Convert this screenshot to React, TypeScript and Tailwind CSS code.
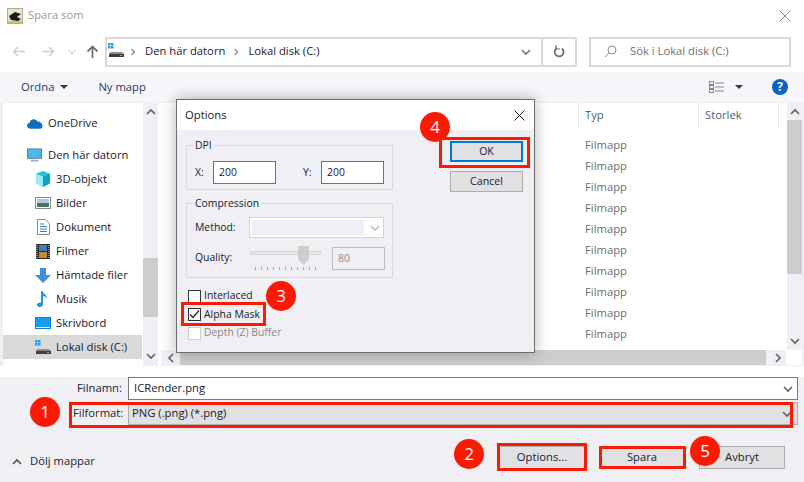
import React from "react";

const font = { fontFamily: '"Open Sans", "Noto Sans", sans-serif' };

function Badge({ n, cls }: { n: string; cls: string }) {
  return (
    <div className={"absolute w-[30px] h-[30px] rounded-full bg-[#fb1b05] text-white text-[17px] flex items-center justify-center " + cls}>
      {n}
    </div>
  );
}

function Chev({ d, cls = "" }: { d: "u" | "d" | "l" | "r"; cls?: string }) {
  const p = { u: "M1 7l4-4 4 4", d: "M1 3l4 4 4-4", l: "M7 1L3 5l4 4", r: "M3 1l4 4-4 4" }[d];
  return (
    <svg width="10" height="10" viewBox="0 0 10 10" className={"shrink-0 " + cls} fill="none" stroke="currentColor" strokeWidth="1.6">
      <path d={p} />
    </svg>
  );
}

function DiskIcon() {
  return (
    <svg width="16" height="15" viewBox="0 0 16 15">
      <rect x="0" y="0" width="2.5" height="2.5" fill="#1fa0ee" />
      <rect x="3" y="0" width="2.5" height="2.5" fill="#1fa0ee" />
      <rect x="0" y="3" width="2.5" height="2.5" fill="#1fa0ee" />
      <rect x="3" y="3" width="2.5" height="2.5" fill="#1fa0ee" />
      <path d="M2 9h12l2 2v3H1v-3z" fill="#8a8d90" />
      <rect x="1" y="11" width="15" height="3" fill="#3c3f41" />
      <rect x="12" y="12" width="2" height="1" fill="#5fd35f" />
    </svg>
  );
}

const icons: Record<string, React.ReactNode> = {
  cube: (
    <svg width="16" height="16" viewBox="0 0 17 17">
      <path d="M8.5 0L16 3v10l-7.500 4L1 13V3z" fill="#2cc3d9" />
      <path d="M1 3l7.500 3v11L1 13z" fill="#9aeaf3" />
      <path d="M8.5 6L16 3v10l-7.500 4z" fill="#12a3c4" />
    </svg>
  ),
  pic: (
    <svg width="16" height="12" viewBox="0 0 16 12">
      <rect x="0.5" y="0.500" width="15" height="11" fill="#fff" stroke="#8a8a8a" />
      <rect x="2" y="2" width="12" height="4" fill="#a9cbe6" />
      <rect x="2" y="6" width="12" height="4" fill="#51705f" />
    </svg>
  ),
  doc: (
    <svg width="13" height="16" viewBox="0 0 13 16" className="ml-[2px]">
      <path d="M.5.5h8l4 4v11H.5z" fill="#fff" stroke="#8a8a8a" />
      <path d="M3 5h4M3 7.500h7M3 10h7M3 12.500h7" stroke="#3c7fc4" />
    </svg>
  ),
  film: (
    <svg width="14" height="15" viewBox="0 0 14 15" className="ml-[1px]">
      <rect width="14" height="15" fill="#2c2c2c" />
      <rect x="3" y="1" width="8" height="6" fill="#3f7fb5" />
      <rect x="3" y="8" width="8" height="6" fill="#c08a3a" />
      <path d="M1 1v13M13 1v13" stroke="#ddd" strokeWidth="1" strokeDasharray="1 1" />
    </svg>
  ),
  down: (
    <svg width="16" height="15" viewBox="0 0 16 15">
      <path d="M5 0h6v7h5l-8 8-8-8h5z" fill="#3f8fdc" />
    </svg>
  ),
  music: (
    <svg width="12" height="16" viewBox="0 0 12 16" className="ml-[2px]">
      <path d="M4 0h1.600c.4 3 4.400 3.600 4.400 7.500-1-1.600-2.600-2.200-4-2.400V13c0 1.700-1.400 3-3.200 3C1.200 16 0 15 0 13.700c0-1.400 1.600-2.400 4-2.200z" fill="#1e90ee" />
    </svg>
  ),
  desk: (
    <svg width="16" height="12" viewBox="0 0 16 12">
      <rect width="16" height="12" fill="#0f7fdc" />
      <rect x="1" y="1" width="14" height="9" fill="#1b9bf0" />
      <rect x="1" y="10" width="14" height="1" fill="#e6f3fb" />
    </svg>
  ),
};

function NavItem({ label, icon, selected }: { label: string; icon: React.ReactNode; selected?: boolean }) {
  return (
    <div className={"flex items-center h-6 pl-[32px] " + (selected ? "bg-[#d9d9d9] w-[139px]" : "")}>
      <span className="w-[21px] flex items-center shrink-0">{icon}</span>
      <span>{label}</span>
    </div>
  );
}

export default function App() {
  return (
    <div style={font} className="relative w-[804px] h-[482px] overflow-hidden bg-white text-[11.25px] text-[#1a1a2e]">
      {/* Title bar */}
      <div className="h-[31px] flex items-center pl-[7px] pr-[13px] bg-white">
        <svg width="16" height="16" viewBox="0 0 16 16" className="mr-[5px]">
          <rect width="16" height="16" fill="#b8a98a" />
          <rect x="1" y="1" width="14" height="14" fill="#e9e4d4" />
          <path d="M2 8l6-4 6 2-4 3 4 2-3 2-7-1z" fill="#1c1c1c" />
          <rect x="1" y="13" width="14" height="2" fill="#d9c45a" />
        </svg>
        <span className="text-[#9a9a9a]">Spara som</span>
        <svg width="12" height="12" viewBox="0 0 12 12" className="ml-auto text-[#8c8c8c]" stroke="currentColor" fill="none">
          <path d="M1 1l10 10M11 1L1 11" />
        </svg>
      </div>

      {/* Address bar */}
      <div className="h-[41px] flex items-center">
        <div className="flex items-center w-[105px] pl-3 text-[#d0d0d0] shrink-0">
          <svg width="13" height="11" viewBox="0 0 13 11" stroke="currentColor" strokeWidth="1.6" fill="none"><path d="M13 5.500H2M6 1L1.500 5.500 6 10" /></svg>
          <svg width="13" height="11" viewBox="0 0 13 11" stroke="currentColor" strokeWidth="1.6" fill="none" className="ml-[17px]"><path d="M0 5.500h11M7 1l4.500 4.500L7 10" /></svg>
          <Chev d="d" cls="ml-[12px] scale-75" />
          <svg width="13" height="13" viewBox="0 0 13 13" stroke="#6f6f6f" strokeWidth="1.8" fill="none" className="ml-[9px]"><path d="M6.500 13V2M1.500 6.500l5-5 5 5" /></svg>
        </div>
        <div className="h-[30px] w-[472px] border-2 border-[#d9d9d9] flex items-center bg-white">
          <span className="ml-[1px] mt-[-2px]"><DiskIcon /></span>
          <Chev d="r" cls="ml-[4px] text-[#8a8a8a] scale-75" />
          <span className="ml-[7px]">Den här datorn</span>
          <Chev d="r" cls="ml-[6px] text-[#8a8a8a] scale-75" />
          <span className="ml-[7px]">Lokal disk (C:)</span>
          <Chev d="d" cls="ml-auto mr-[10px] text-[#707070]" />
          <div className="h-full w-[34px] border-l-2 border-[#d9d9d9] flex items-center justify-center">
            <svg width="12" height="13" viewBox="0 0 12 13" fill="none" stroke="#6f6f6f" strokeWidth="1.8"><path d="M4 3a4.500 4.500 0 1 0 5 .5" /><path d="M3 0v4h4" strokeWidth="1.2" /></svg>
          </div>
        </div>
        <div className="h-[30px] w-[202px] ml-[12px] border-2 border-[#d9d9d9] flex items-center">
          <svg width="13" height="13" viewBox="0 0 13 13" fill="none" stroke="#8c8c8c" className="ml-[13px]"><circle cx="8" cy="5" r="4" /><path d="M5 8l-4 4" /></svg>
          <span className="ml-[13px] text-[#6e6e6e]">Sök i Lokal disk (C:)</span>
        </div>
      </div>

      {/* Toolbar */}
      <div className="h-[30px] bg-[#f5f5fa] flex items-center">
        <span className="ml-[21px] text-[#1f3a5f]">Ordna</span>
        <span className="ml-[6px] w-0 h-0 border-x-[4px] border-x-transparent border-t-[4px] border-t-[#1f3a5f]" />
        <span className="ml-[30px] text-[#1f3a5f]">Ny mapp</span>
        <div className="ml-auto flex items-center">
          <svg width="16" height="13" viewBox="0 0 16 13" stroke="#8a8a8a" fill="none"><rect x=".5" y=".5" width="4" height="3" /><rect x=".5" y="4.500" width="4" height="3" /><rect x=".5" y="8.500" width="4" height="3" /><path d="M6 2h9M6 6h9M6 10h9" /></svg>
          <span className="ml-[10px] w-0 h-0 border-x-[4px] border-x-transparent border-t-[4px] border-t-[#1f3a5f]" />
          <span className="ml-[29px] mr-[16px] w-4 h-4 rounded-full bg-[#0f62c2] text-white font-bold text-[12px] flex items-center justify-center">?</span>
        </div>
      </div>

      {/* Main */}
      <div className="h-[264px] flex bg-[#f0eff4] pl-[3px] pr-[2px] pt-[1px]">
        {/* Tree */}
        <div className="w-[140px] h-[263px] bg-white pt-[8px] shrink-0 flex flex-col">
          <div className="flex items-center h-6 pl-[24px]">
            <svg width="16" height="11" viewBox="0 0 17 11" className="mr-[5px]"><path d="M3.500 11C1.500 11 0 9.600 0 8c0-1.400 1-2.600 2.600-2.900C3 2.600 5 1 7 1c2 0 3.200 1 4 2.300 2.600-.4 5 1.600 5.200 4C17 9.500 15.800 11 14 11z" fill="#0f6cc8" /></svg>
            <span>OneDrive</span>
          </div>
          <div className="h-2" />
          <div className="flex items-center h-6 pl-[24px]">
            <svg width="16" height="15" viewBox="0 0 17 15" className="mr-[5px]"><rect width="16" height="11" fill="#5a7a94" /><rect x="1" y="1" width="14" height="9" fill="#4db8f0" /><rect x="4" y="12" width="8" height="2" fill="#9cb0bf" /></svg>
            <span>Den här datorn</span>
          </div>
          <NavItem label="3D-objekt" icon={icons.cube} />
          <NavItem label="Bilder" icon={icons.pic} />
          <NavItem label="Dokument" icon={icons.doc} />
          <NavItem label="Filmer" icon={icons.film} />
          <NavItem label="Hämtade filer" icon={icons.down} />
          <NavItem label="Musik" icon={icons.music} />
          <NavItem label="Skrivbord" icon={icons.desk} />
          <NavItem label="Lokal disk (C:)" icon={<DiskIcon />} selected />
        </div>
        {/* Tree scrollbar */}
        <div className="w-[15px] h-[259px] bg-[#f0eff4] flex flex-col items-center text-[#606060] shrink-0">
          <Chev d="u" cls="mt-[4px]" />
          <div className="w-full h-[59px] mt-[141px] bg-[#cdcdcd]" />
          <Chev d="d" cls="mt-auto mb-[1px]" />
        </div>
        <div className="w-[3px] h-[263px] bg-white" />
        {/* File list */}
        <div className="flex-1 flex flex-col bg-white h-[262px]">
          <div className="flex-1 flex min-h-0">
            <div className="flex-1 min-w-0">
              <div className="flex h-[25px] items-center">
                <div className="w-[418px] h-full border-r border-[#e5e5e5]" />
                <div className="w-[120px] h-full flex items-center pl-[6px] text-[#4c607a] border-r border-[#e5e5e5]">Typ</div>
                <div className="w-[80px] h-full flex items-center pl-[6px] text-[#4c607a] border-r border-[#e5e5e5]">Storlek</div>
              </div>
              <div className="pl-[424px] pt-[6px]">
                {Array.from({ length: 10 }, (_, i) => (
                  <div key={i} className="h-[21px] leading-[21px] text-[#6d6d6d]">Filmapp</div>
                ))}
              </div>
            </div>
            <div className="w-[15px] bg-[#f0eff4] flex flex-col items-center text-[#606060] shrink-0">
              <Chev d="u" cls="mt-[4px]" />
              <div className="w-full h-[154px] mt-[3px] bg-[#cdcdcd]" />
              <Chev d="d" cls="mt-auto mb-[4px]" />
            </div>
          </div>
          <div className="h-[15px] flex items-center shrink-0">
            <div className="flex-1 h-full bg-[#f0eff4] flex items-center text-[#606060]">
              <Chev d="l" cls="ml-[5px]" />
              <div className="flex-1 h-full ml-[4px] bg-[#cdcdcd]" />
              <Chev d="r" cls="ml-[7px] mr-[3px]" />
            </div>
            <div className="w-[16px] h-full bg-white" />
          </div>
        </div>
      </div>

      {/* Bottom form */}
      <div className="h-[116px] bg-[#f0eff4]">
        <div className="flex items-center h-[23px] pt-0 mt-[11px] ml-[77px]">
          <span className="w-[50px]">Filnamn:</span>
          <div className="ml-[1px] w-[670px] h-[23px] bg-white border border-[#7a7a7a] flex items-center pl-[5px]">
            <span>ICRender.png</span>
            <Chev d="d" cls="ml-auto mr-[4px] text-[#606060]" />
          </div>
        </div>
        <div className="flex items-center h-[23px] mt-[2px] ml-[73px]">
          <span className="w-[55px]">Filformat:</span>
          <div className="w-[670px] h-[23px] bg-[#e1e0e3] border border-[#adadad] flex items-center pl-[3px]">
            <span>PNG (.png) (*.png)</span>
            <Chev d="d" cls="ml-auto mr-[5px] text-[#606060]" />
          </div>
        </div>
        <div className="flex mt-[21px] pl-[12px] pr-[19px]">
          <div className="flex items-center h-[23px] mt-[4px]">
            <Chev d="u" cls="text-[#505050]" />
            <span className="ml-[8px]">Dölj mappar</span>
          </div>
          <div className="ml-auto flex gap-[14px]">
            <div className="w-[86px] h-[23px] bg-[#e1e0e3] border border-[#adadad] flex items-center justify-center">Options...</div>
            <div className="w-[86px] h-[23px] bg-[#e1e0e3] border border-[#adadad] flex items-center justify-center">Spara</div>
            <div className="w-[86px] h-[23px] bg-[#e1e0e3] border border-[#adadad] flex items-center justify-center">Avbryt</div>
          </div>
        </div>
      </div>

      {/* Options dialog */}
      <div className="absolute left-[176px] top-[99px] w-[359px] h-[254px] border border-[#6e6e6e] bg-[#f0eff3] shadow-[0_0_14px_rgba(0,0,0,0.3)] flex flex-col">
        <div className="h-[30px] bg-white flex items-center pl-[8px] pr-[9px] shrink-0">
          <span>Options</span>
          <svg width="11" height="11" viewBox="0 0 11 11" stroke="#1a1a1a" fill="none" className="ml-auto"><path d="M.5.5l10 10M10.500.5l-10 10" /></svg>
        </div>
        <div className="flex pl-[9px] pt-[15px] text-[10.4px]">
          <div className="w-[207px] shrink-0">
            <div className="relative h-[45px] border border-[#d9d9d9] flex items-center pl-[8px]">
              <span className="absolute -top-[8px] left-[6px] bg-[#f0eff3] px-[2px]">DPI</span>
              <span className="mt-[10px] w-[18px]">X:</span>
              <div className="mt-[10px] w-[63px] h-[23px] border border-[#707070] bg-white pl-[5px] leading-[21px]">200</div>
              <span className="mt-[10px] ml-[27px] w-[18px]">Y:</span>
              <div className="mt-[10px] w-[63px] h-[23px] border border-[#707070] bg-white pl-[5px] leading-[21px]">200</div>
            </div>
            <div className="relative h-[75px] mt-[13px] border border-[#d9d9d9] pl-[8px]">
              <span className="absolute -top-[8px] left-[6px] bg-[#f0eff3] px-[2px]">Compression</span>
              <div className="flex items-center mt-[13px]">
                <span className="w-[54px]">Method:</span>
                <div className="w-[135px] h-[21px] border border-[#d4d4d4] bg-white flex items-center pl-[2px]">
                  <div className="w-[112px] h-[15px] bg-[#f0eff3]" />
                  <Chev d="d" cls="ml-[6px] text-[#c0c0c0]" />
                </div>
              </div>
              <div className="flex items-center mt-[8px]">
                <span className="w-[55px]">Quality:</span>
                <div className="relative w-[71px] h-[24px]">
                  <div className="absolute left-0 top-[5px] w-[71px] h-[4px] bg-[#e6e6e6] border border-[#d6d6d6]" />
                  <svg width="12" height="19" viewBox="0 0 12 19" className="absolute left-[48px] top-0"><path d="M0 0h11v13l-5.500 6L0 13z" fill="#cdcdcd" /></svg>
                  <div className="absolute left-[5px] top-[21px] w-[62px] h-[3px] bg-[repeating-linear-gradient(90deg,#a8a8a8_0,#a8a8a8_1px,transparent_1px,transparent_6px)]" />
                </div>
                <div className="ml-[11px] w-[53px] h-[23px] border border-[#bdbdbd] text-[#8a8a8a] pl-[5px] leading-[21px]">80</div>
              </div>
            </div>
            <div className="mt-[9px] pl-[2px]">
              <div className="flex items-center h-[18px]">
                <span className="w-[13px] h-[13px] border border-[#333] bg-white" />
                <span className="ml-[3px]">Interlaced</span>
              </div>
              <div className="flex items-center h-[19px]">
                <span className="w-[13px] h-[13px] border border-[#333] bg-white flex items-center justify-center">
                  <svg width="11" height="9" viewBox="0 0 11 9" fill="none" stroke="#222" strokeWidth="1.2"><path d="M1 4.500l3 3 6-7" /></svg>
                </span>
                <span className="ml-[3px]">Alpha Mask</span>
              </div>
              <div className="flex items-center h-[18px]">
                <span className="w-[13px] h-[13px] border border-[#cfcfcf] bg-white" />
                <span className="ml-[3px] text-[#8a8a8a]">Depth (Z) Buffer</span>
              </div>
            </div>
          </div>
          <div className="ml-[57px] flex flex-col gap-[9px] -mt-[4px] text-[10.6px]">
            <div className="w-[73px] h-[21px] bg-[#e1e0e3] border-2 border-[#0078d7] flex items-center justify-center">OK</div>
            <div className="w-[73px] h-[21px] bg-[#e1e0e3] border border-[#adadad] flex items-center justify-center">Cancel</div>
          </div>
        </div>
      </div>

      {/* Red highlight frames */}
      <div className="absolute left-[69px] top-[402px] w-[724px] h-[26px] border-[3px] border-[#fb1b05]" />
      <div className="absolute left-[497px] top-[443px] w-[90px] h-[28px] border-[3px] border-[#fb1b05]" />
      <div className="absolute left-[599px] top-[446px] w-[87px] h-[23px] border-[3px] border-[#fb1b05]" />
      <div className="absolute left-[181px] top-[302px] w-[85px] h-[24px] border-[3px] border-[#fb1b05]" />
      <div className="absolute left-[439px] top-[137px] w-[91px] h-[31px] border-[3px] border-[#fb1b05]" />

      <Badge n="1" cls="left-[30px] top-[397px]" />
      <Badge n="2" cls="left-[454px] top-[439px]" />
      <Badge n="3" cls="left-[266px] top-[281px]" />
      <Badge n="4" cls="left-[420px] top-[112px]" />
      <Badge n="5" cls="left-[690px] top-[436px]" />
    </div>
  );
}
